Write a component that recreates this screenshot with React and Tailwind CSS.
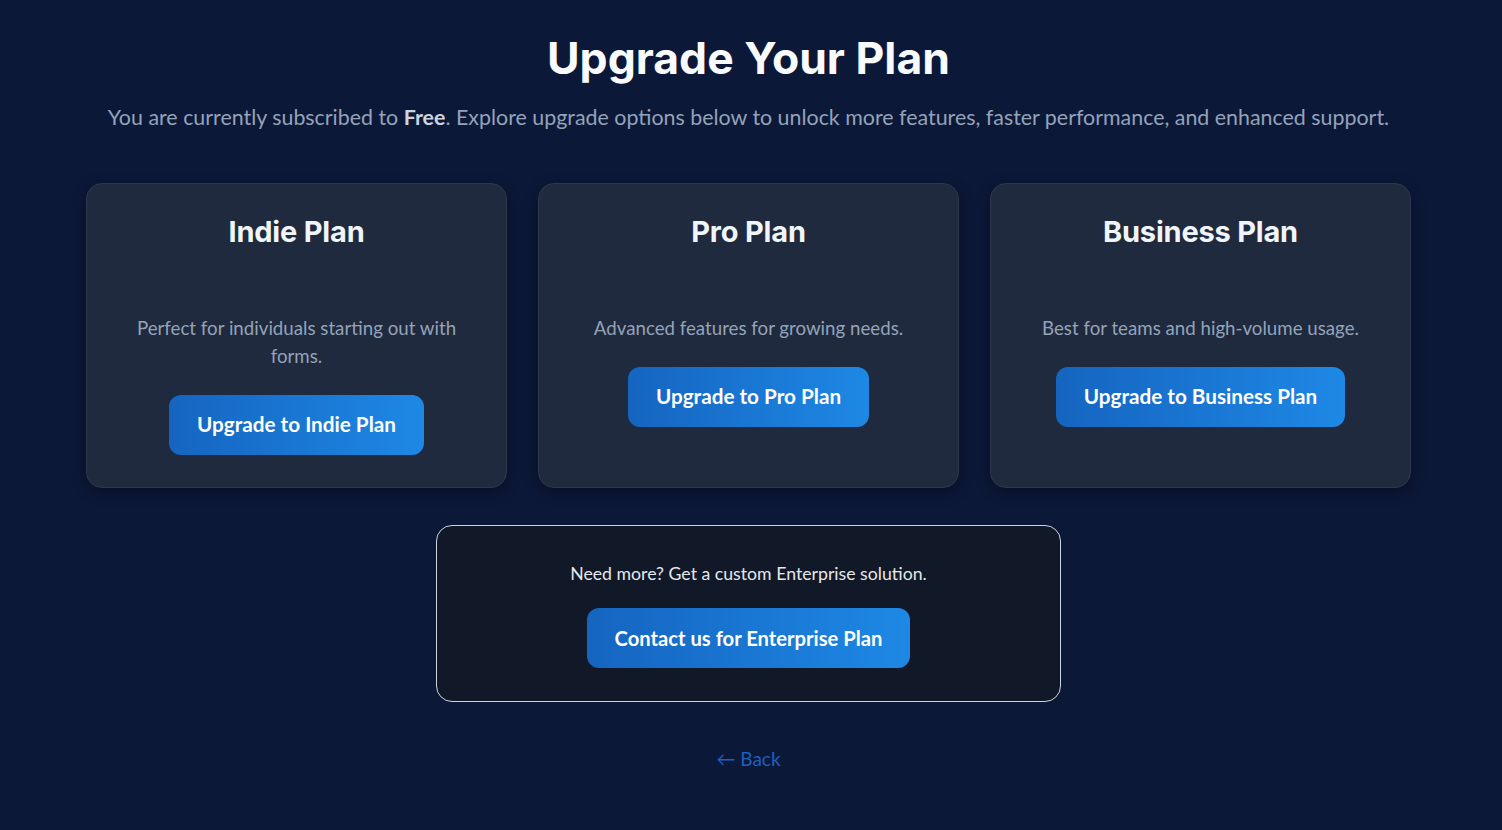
const plans = [
  {
    name: "Indie Plan",
    desc: "Perfect for individuals starting out with forms.",
    cta: "Upgrade to Indie Plan",
  },
  {
    name: "Pro Plan",
    desc: "Advanced features for growing needs.",
    cta: "Upgrade to Pro Plan",
  },
  {
    name: "Business Plan",
    desc: "Best for teams and high-volume usage.",
    cta: "Upgrade to Business Plan",
  },
];

const body = "font-['Lato','Open_Sans',sans-serif]";
const head = "font-['Inter','Noto_Sans',sans-serif]";

function PlanCard({ plan }) {
  return (
    <div className="flex flex-col items-center rounded-2xl border border-[#2c384d] bg-gradient-to-br from-[#1f2a3f] to-[#1f2a3e] px-12 pt-[27px] pb-8 shadow-[0_4px_14px_rgba(0,0,0,0.35)]">
      <h2 className={`${head} text-[29px] leading-[42px] font-bold tracking-[-0.2px] text-[#f1f5f9]`}>
        {plan.name}
      </h2>
      <p className={`${body} mt-[61px] text-center text-[18.7px] leading-[28px] text-[#94a3b8]`}>
        {plan.desc}
      </p>
      <button className={`${body} mt-[25px] h-[60px] rounded-xl bg-gradient-to-r from-[#1565c0] to-[#1e88e5] px-7 text-[20.7px] font-bold text-white`}>
        {plan.cta}
      </button>
    </div>
  );
}

export default function App() {
  return (
    <div className="min-h-[830px] w-full bg-[#0c1838] pt-[30px] pr-[5px]">
      <div className="mx-auto flex max-w-[1325px] flex-col items-center">
        <h1 className={`${head} text-[44.5px] leading-[56px] font-bold text-[#f8fafc]`}>
          Upgrade Your Plan
        </h1>
        <p className={`${body} mt-[16px] text-[21.4px] leading-[30px] whitespace-nowrap text-[#94a3b8]`}>
          You are currently subscribed to <strong className="font-bold text-[#cbd5e1]">Free</strong>. Explore upgrade options below to unlock more features, faster performance, and enhanced support.
        </p>

        <div className="mt-[51px] grid w-full grid-cols-3 gap-[31px]">
          {plans.map((plan) => (
            <PlanCard key={plan.name} plan={plan} />
          ))}
        </div>

        <div className="mt-[37px] flex w-[625px] flex-col items-center rounded-2xl border border-[#cbd5e1] bg-[#111827] pt-[34px] pb-[33px]">
          <p className={`${body} text-[17.7px] leading-[28px] text-[#e5e7eb]`}>
            Need more? Get a custom Enterprise solution.
          </p>
          <button className={`${body} mt-[20px] h-[60px] rounded-xl bg-gradient-to-r from-[#1565c0] to-[#1e88e5] px-7 text-[20.2px] font-bold text-white`}>
            Contact us for Enterprise Plan
          </button>
        </div>

        <a href="#" className={`${body} mt-[42px] text-[19px] leading-[30px] text-[#1e5fbf]`}>
          ← Back
        </a>
      </div>
    </div>
  );
}
